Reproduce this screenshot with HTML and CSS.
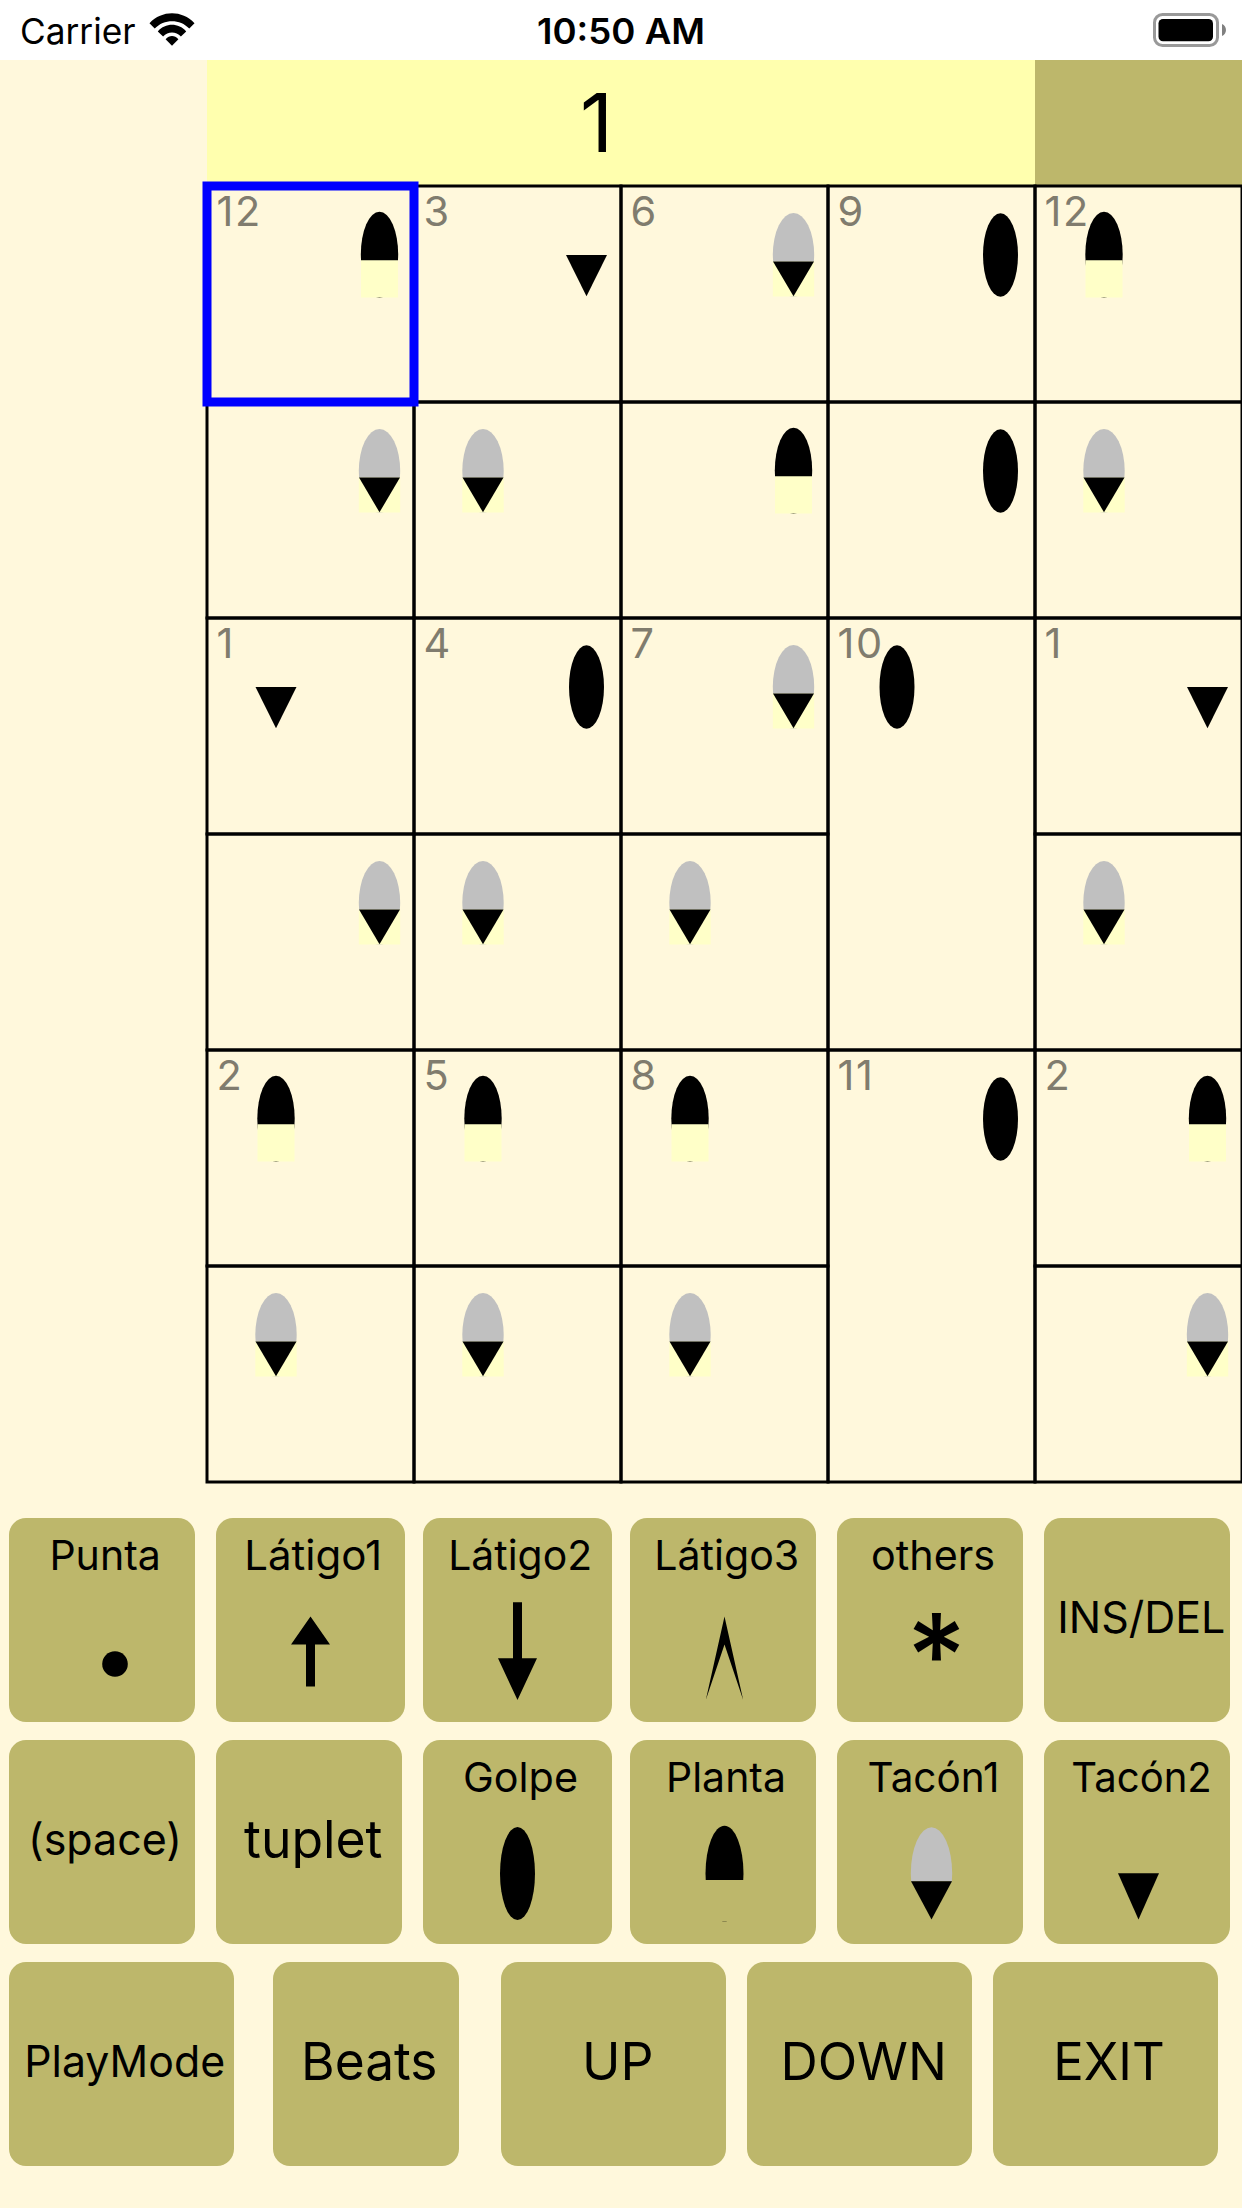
FILE: index.html
```html
<!DOCTYPE html>
<html lang="es">
<head>
<meta charset="utf-8">
<title>Compás</title>
<link rel="stylesheet" href="styles.css">
</head>
<body>
<svg class="defs" aria-hidden="true">
  <defs>
    <!-- score marks, centred on x=0 -->
    <g id="planta"><ellipse cy="68.7" rx="18.7" ry="43"/><path class="mask" d="M-18.5 74.3h37v37.2h-37z"/></g>
    <g id="golpe"><ellipse cy="69" rx="17.5" ry="41.8"/></g>
    <g id="tacon1"><ellipse class="toe" cy="69" rx="20.7" ry="42"/><path class="mask" d="M-20.7 75.6h41.4v34.9h-41.4z"/><path d="M-20.5 75.6h41L0 110.3z"/></g>
    <g id="tacon2"><path d="M-20.5 69h41L0 110.3z"/></g>
    <rect id="frame" width="207" height="216"/>
    <rect id="frame2" width="207" height="432"/>
  </defs>
</svg>

<header class="status">
  <svg class="status-art" viewBox="0 0 1242 60">
    <text x="20" y="44" font-size="35.3" textLength="115.5" lengthAdjust="spacingAndGlyphs">Carrier</text>
    <path d="M149.5 23.2C162 10 182 10 194.500 23.2L189.300 28.600C180 18.800 164 18.800 154.700 28.600Z"/>
    <path d="M157.800 31.400C165.500 22.500 178.500 22.500 186.200 31.400L180.900 36.600C176 31.200 168 31.200 163.100 36.600Z"/>
    <path d="M165.600 39.200C169.500 35 174.500 35 178.400 39.200L172 45.800Z"/>
    <text class="clock" x="537" y="44" font-size="35.3" textLength="168" lengthAdjust="spacingAndGlyphs">10:50 AM</text>
    <rect class="battery" x="1154.500" y="14.500" width="63" height="31" rx="8"/>
    <rect x="1158.500" y="19" width="54.500" height="22.300" rx="4.500"/>
    <path class="nub" d="M1222 24C1227.300 26 1227.300 34 1222 36Z"/>
  </svg>
</header>

<main class="score">
  <div class="bars">
    <div class="bar bar-current">1</div>
    <div class="bar bar-next"></div>
  </div>
  <div class="grid">
    <div class="cell selected"><span class="count">12</span><svg><use href="#frame"/><use href="#planta" x="172.5"/></svg></div>
    <div class="cell"><span class="count">3</span><svg><use href="#frame"/><use href="#tacon2" x="172.5"/></svg></div>
    <div class="cell"><span class="count">6</span><svg><use href="#frame"/><use href="#tacon1" x="172.5"/></svg></div>
    <div class="cell"><span class="count">9</span><svg><use href="#frame"/><use href="#golpe" x="172.5"/></svg></div>
    <div class="cell"><span class="count">12</span><svg><use href="#frame"/><use href="#planta" x="69"/></svg></div>

    <div class="cell"><svg><use href="#frame"/><use href="#tacon1" x="172.5"/></svg></div>
    <div class="cell"><svg><use href="#frame"/><use href="#tacon1" x="69"/></svg></div>
    <div class="cell"><svg><use href="#frame"/><use href="#planta" x="172.5"/></svg></div>
    <div class="cell"><svg><use href="#frame"/><use href="#golpe" x="172.5"/></svg></div>
    <div class="cell"><svg><use href="#frame"/><use href="#tacon1" x="69"/></svg></div>

    <div class="cell"><span class="count">1</span><svg><use href="#frame"/><use href="#tacon2" x="69"/></svg></div>
    <div class="cell"><span class="count">4</span><svg><use href="#frame"/><use href="#golpe" x="172.5"/></svg></div>
    <div class="cell"><span class="count">7</span><svg><use href="#frame"/><use href="#tacon1" x="172.5"/></svg></div>
    <div class="cell tall"><span class="count">10</span><svg><use href="#frame2"/><use href="#golpe" x="69"/></svg></div>
    <div class="cell"><span class="count">1</span><svg><use href="#frame"/><use href="#tacon2" x="172.5"/></svg></div>

    <div class="cell"><svg><use href="#frame"/><use href="#tacon1" x="172.5"/></svg></div>
    <div class="cell"><svg><use href="#frame"/><use href="#tacon1" x="69"/></svg></div>
    <div class="cell"><svg><use href="#frame"/><use href="#tacon1" x="69"/></svg></div>
    <div class="cell"><svg><use href="#frame"/><use href="#tacon1" x="69"/></svg></div>

    <div class="cell"><span class="count">2</span><svg><use href="#frame"/><use href="#planta" x="69"/></svg></div>
    <div class="cell"><span class="count">5</span><svg><use href="#frame"/><use href="#planta" x="69"/></svg></div>
    <div class="cell"><span class="count">8</span><svg><use href="#frame"/><use href="#planta" x="69"/></svg></div>
    <div class="cell tall"><span class="count">11</span><svg><use href="#frame2"/><use href="#golpe" x="172.5"/></svg></div>
    <div class="cell"><span class="count">2</span><svg><use href="#frame"/><use href="#planta" x="172.5"/></svg></div>

    <div class="cell"><svg><use href="#frame"/><use href="#tacon1" x="69"/></svg></div>
    <div class="cell"><svg><use href="#frame"/><use href="#tacon1" x="69"/></svg></div>
    <div class="cell"><svg><use href="#frame"/><use href="#tacon1" x="69"/></svg></div>
    <div class="cell"><svg><use href="#frame"/><use href="#tacon1" x="172.5"/></svg></div>
  </div>
</main>

<nav class="keys">
  <button class="key"><svg>
    <text class="sm" x="40.4" y="52" textLength="111.500" lengthAdjust="spacingAndGlyphs">Punta</text>
    <circle cx="106" cy="146" r="12.800"/></svg></button>
  <button class="key wide"><svg>
    <text class="sm" x="28.200" y="52" textLength="138" lengthAdjust="spacingAndGlyphs">Látigo1</text>
    <path d="M94.500 98.500L114 126.500H99V168.500H90V126.500H75Z"/></svg></button>
  <button class="key wide"><svg>
    <text class="sm" x="25.200" y="52" textLength="144" lengthAdjust="spacingAndGlyphs">Látigo2</text>
    <path d="M90 84.300H99V140.300H114L94.500 182L75 140.300H90Z"/></svg></button>
  <button class="key"><svg>
    <text class="sm" x="24.200" y="52" textLength="145" lengthAdjust="spacingAndGlyphs">Látigo3</text>
    <path d="M94.500 98.500L113.200 182L94.500 126.500L75.800 182Z"/></svg></button>
  <button class="key"><svg>
    <text class="sm" x="34" y="52" textLength="124" lengthAdjust="spacingAndGlyphs">others</text>
    <text class="star" x="99.500" y="179">*</text></svg></button>
  <button class="key"><svg>
    <text class="md" x="13.300" y="115" textLength="168" lengthAdjust="spacingAndGlyphs">INS/DEL</text></svg></button>
</nav>

<nav class="keys">
  <button class="key"><svg>
    <text class="md" x="19" y="115" textLength="154" lengthAdjust="spacingAndGlyphs">(space)</text></svg></button>
  <button class="key"><svg>
    <text class="lg" x="28" y="118" textLength="138.500" lengthAdjust="spacingAndGlyphs">tuplet</text></svg></button>
  <button class="key wide"><svg>
    <text class="sm" x="40" y="52" textLength="115" lengthAdjust="spacingAndGlyphs">Golpe</text>
    <ellipse cx="94.500" cy="133.500" rx="17.500" ry="46.500"/></svg></button>
  <button class="key"><svg>
    <text class="sm" x="36" y="52" textLength="120" lengthAdjust="spacingAndGlyphs">Planta</text>
    <ellipse cx="94.500" cy="133.500" rx="19" ry="47.800"/><path class="cover" d="M75 140h39v41H75z"/></svg></button>
  <button class="key"><svg>
    <text class="sm" x="30.500" y="52" textLength="132" lengthAdjust="spacingAndGlyphs">Tacón1</text>
    <ellipse class="toe" cx="94.500" cy="133.500" rx="20.700" ry="46.300"/><path class="cover" d="M73 141.300h43v40H73z"/><path d="M74 141.300h41L94.500 179.500z"/></svg></button>
  <button class="key"><svg>
    <text class="sm" x="27.300" y="52" textLength="140.500" lengthAdjust="spacingAndGlyphs">Tacón2</text>
    <path d="M74 133.200h41L94.500 179.500z"/></svg></button>
</nav>

<nav class="keys commands">
  <button class="key command"><svg>
    <text class="md" x="15.200" y="115" textLength="201" lengthAdjust="spacingAndGlyphs">PlayMode</text></svg></button>
  <button class="key"><svg>
    <text class="lg" x="28" y="118" textLength="136.500" lengthAdjust="spacingAndGlyphs">Beats</text></svg></button>
  <button class="key command"><svg>
    <text class="lg" x="81" y="118" textLength="71.500" lengthAdjust="spacingAndGlyphs">UP</text></svg></button>
  <button class="key command"><svg>
    <text class="lg" x="33.400" y="118" textLength="166.500" lengthAdjust="spacingAndGlyphs">DOWN</text></svg></button>
  <button class="key command"><svg>
    <text class="lg" x="60.200" y="118" textLength="111.500" lengthAdjust="spacingAndGlyphs">EXIT</text></svg></button>
</nav>
</body>
</html>
```
FILE: styles.css
```css
* { box-sizing: border-box; }

body {
  margin: 0;
  width: 1242px;
  height: 2208px;
  overflow: hidden;
  background: #fff8dc;
  color: #000;
  font-family: Inter, "Liberation Sans", sans-serif;
}

.defs { display: none; }

/* status bar */
.status { height: 60px; background: #fff; }
.status-art { display: block; width: 1242px; height: 60px; }
.clock { font-weight: 600; }
.battery { fill: none; stroke: #999; stroke-width: 3; }
.nub { fill: #808080; }

/* score */
.score { margin-left: 207px; height: 1422px; }
.bars { display: flex; height: 126px; }
.bar-current {
  width: 828px;
  padding-left: 373px;
  background: #ffffae;
  font-size: 81.5px;
  line-height: 125px;
}
.bar-next { flex: 1; background: #bdb76b; }

.grid {
  display: grid;
  grid-template-columns: repeat(5, 207px);
  grid-template-rows: repeat(6, 216px);
}
.cell { display: flex; position: relative; }
.cell svg { display: block; width: 207px; height: 216px; overflow: visible; }
.tall { grid-row: span 2; }
.count {
  width: 60px;
  margin-right: -60px;
  padding-left: 9.5px;
  font-size: 41.5px;
  line-height: 50px;
  letter-spacing: 1.5px;
  color: #807c6e;
}
.cell use:first-child { fill: none; stroke: #000; stroke-width: 3px; }
.selected { z-index: 1; }
.cell.selected use:first-child { stroke: #00f; stroke-width: 9px; }
.mask { fill: #ffffc8; }
.toe { fill: #c0c0c0; }

/* keyboard */
.keys {
  display: grid;
  grid-template-columns: repeat(6, 207px);
  height: 204px;
  margin: 36px 0 0 9px;
}
.keys + .keys { margin-top: 18px; }
.commands { grid-template-columns: 264px 228px 246px 246px 225px; }
.key {
  width: 186px;
  height: 204px;
  padding: 0;
  border: 0;
  border-radius: 17px;
  background: #bdb76b;
  color: #000;
  font-family: inherit;
}
.wide { width: 189px; }
.command { width: 225px; }
.key svg { display: block; width: 100%; height: 204px; overflow: visible; }
.cover { fill: #bdb76b; }
.sm { font-size: 41.2px; }
.md { font-size: 43.8px; }
.lg { font-size: 52.3px; }
.star { font-size: 116px; font-weight: 500; text-anchor: middle; }
```
